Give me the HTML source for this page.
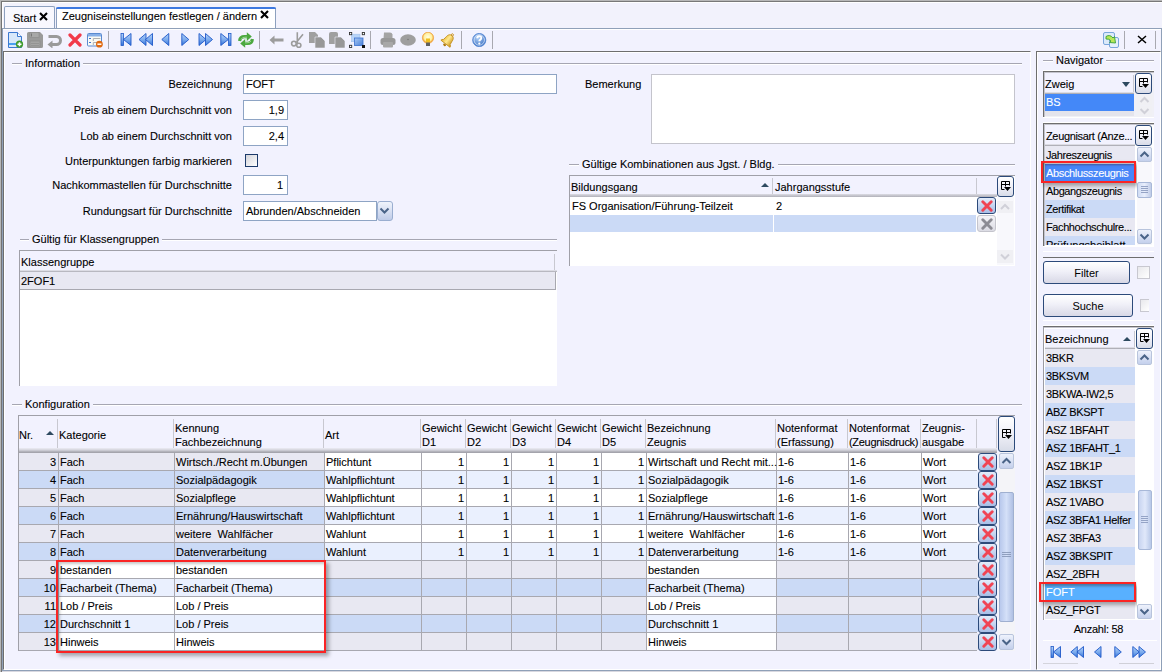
<!DOCTYPE html><html><head><meta charset="utf-8"><style>
html,body{margin:0;padding:0;}
body{width:1162px;height:672px;position:relative;overflow:hidden;background:#F2F2FE;font-family:"Liberation Sans",sans-serif;font-size:11px;color:#000;}
div{position:absolute;box-sizing:border-box;}
.t{white-space:nowrap;line-height:13px;-webkit-text-stroke:0.1px currentColor;}
</style></head><body>
<div style="left:0px;top:0px;width:1162px;height:1px;background:#B8B8B8"></div>
<div style="left:0px;top:0px;width:1px;height:672px;background:#B8B8B8"></div>
<div style="left:1px;top:1px;width:1161px;height:1px;background:#787878"></div>
<div style="left:1px;top:1px;width:1px;height:671px;background:#747474"></div>
<div style="left:2px;top:2px;width:1160px;height:1px;background:#FFFFFF"></div>
<div style="left:2px;top:3px;width:1px;height:26px;background:#FFFFFF"></div>
<div style="left:3px;top:3px;width:1159px;height:25px;background:#F2F2FC"></div>
<div style="left:2px;top:28px;width:1160px;height:644px;border:1px solid #8FA0B8;border-bottom:none"></div>
<div style="left:2px;top:670px;width:1160px;height:1px;background:#8FA0B8"></div>
<div style="left:2px;top:671px;width:1160px;height:1px;background:#D8D8E0"></div>
<div style="left:3px;top:29px;width:1158px;height:1px;background:#FFFFFF"></div>
<div style="left:4px;top:6px;width:51px;height:22px;background:#F8F8FE;border:1px solid #8DA0BE;border-bottom:none;border-radius:2px 2px 0 0"></div>
<div class="t" style="left:13px;top:12px;">Start</div>
<svg style="position:absolute;left:39px;top:12px" width="9" height="9" viewBox="0 0 9 9"><path d="M1 1L8 8M8 1L1 8" stroke="#000" stroke-width="2.1"/></svg>
<div style="left:56px;top:7px;width:220px;height:21px;background:#FFFFFF;border:1px solid #8DA0BE;border-top:none;border-bottom:none;border-radius:2px 2px 0 0"></div>
<div style="left:56px;top:7px;width:220px;height:2px;background:#3C78E0;border-radius:2px 2px 0 0"></div>
<div class="t" style="left:62px;top:10px;">Zeugniseinstellungen festlegen / ändern</div>
<svg style="position:absolute;left:260px;top:10px" width="9" height="9" viewBox="0 0 9 9"><path d="M1 1L8 8M8 1L1 8" stroke="#000" stroke-width="2.1"/></svg>
<div style="left:3px;top:51px;width:1028px;height:619px;border-top:1px solid #6E6E6E;border-left:1px solid #6E6E6E;border-right:1px solid #FFF;border-bottom:1px solid #FFF"></div>
<div style="left:4px;top:52px;width:1026px;height:1px;background:#fff"></div>
<div style="left:4px;top:52px;width:1px;height:617px;background:#fff"></div>
<div style="left:1036px;top:51px;width:125px;height:619px;border-top:1px solid #6E6E6E;border-left:1px solid #6E6E6E;border-right:1px solid #FFF;border-bottom:1px solid #FFF"></div>
<div style="left:1037px;top:52px;width:123px;height:1px;background:#fff"></div>
<div style="left:1037px;top:52px;width:1px;height:617px;background:#fff"></div>
<div style="left:12px;top:63px;width:1010px;height:1px;background:#A6A6B2"></div>
<div style="left:12px;top:64px;width:1010px;height:1px;background:#FFF"></div>
<div class="t" style="left:22px;top:57px;padding:0 3px;background:#F2F2FE">Information</div>
<div style="left:20px;top:239px;width:537px;height:1px;background:#A6A6B2"></div>
<div style="left:20px;top:240px;width:537px;height:1px;background:#FFF"></div>
<div class="t" style="left:29px;top:233px;padding:0 3px;background:#F2F2FE">Gültig für Klassengruppen</div>
<div style="left:569px;top:164px;width:446px;height:1px;background:#A6A6B2"></div>
<div style="left:569px;top:165px;width:446px;height:1px;background:#FFF"></div>
<div class="t" style="left:579px;top:158px;padding:0 3px;background:#F2F2FE">Gültige Kombinationen aus Jgst. / Bldg.</div>
<div style="left:12px;top:404px;width:1010px;height:1px;background:#A6A6B2"></div>
<div style="left:12px;top:405px;width:1010px;height:1px;background:#FFF"></div>
<div class="t" style="left:22px;top:398px;padding:0 3px;background:#F2F2FE">Konfiguration</div>
<div style="left:1043px;top:60px;width:111px;height:1px;background:#A6A6B2"></div>
<div style="left:1043px;top:61px;width:111px;height:1px;background:#FFF"></div>
<div class="t" style="left:1053px;top:54px;padding:0 3px;background:#F2F2FE">Navigator</div>
<div class="t" style="right:930px;top:78px;">Bezeichnung</div>
<div class="t" style="right:930px;top:104px;">Preis ab einem Durchschnitt von</div>
<div class="t" style="right:930px;top:130px;">Lob ab einem Durchschnitt von</div>
<div class="t" style="right:930px;top:155px;">Unterpunktungen farbig markieren</div>
<div class="t" style="right:930px;top:179px;">Nachkommastellen für Durchschnitte</div>
<div class="t" style="right:930px;top:205px;">Rundungsart für Durchschnitte</div>
<div style="left:243px;top:74px;width:314px;height:20px;background:#fff;border:1px solid #8EA4C4"></div>
<div class="t" style="left:246px;top:78px;">FOFT</div>
<div style="left:243px;top:100px;width:45px;height:20px;background:#fff;border:1px solid #8EA4C4"></div>
<div class="t" style="right:878px;top:104px;">1,9</div>
<div style="left:243px;top:126px;width:45px;height:20px;background:#fff;border:1px solid #8EA4C4"></div>
<div class="t" style="right:878px;top:130px;">2,4</div>
<div style="left:245px;top:154px;width:13px;height:13px;background:linear-gradient(135deg,#D4D4DA,#FFFFFF);border:1px solid #1C3A6A"></div>
<div style="left:243px;top:175px;width:45px;height:20px;background:#fff;border:1px solid #8EA4C4"></div>
<div class="t" style="right:879px;top:179px;">1</div>
<div style="left:243px;top:201px;width:134px;height:20px;background:#fff;border:1px solid #8EA4C4"></div>
<div class="t" style="left:246px;top:205px;">Abrunden/Abschneiden</div>
<div style="left:377px;top:201px;width:16px;height:20px;background:linear-gradient(#F0F4FC,#C0CCE8);border:1px solid #9AAED0;border-radius:3px"></div>
<svg style="position:absolute;left:379px;top:207px" width="11" height="8"><path d="M1.5 1.5L5.5 5.5L9.5 1.5" fill="none" stroke="#4A6488" stroke-width="2"/></svg>
<div class="t" style="left:585px;top:78px;">Bemerkung</div>
<div style="left:651px;top:74px;width:364px;height:70px;background:#fff;border:1px solid #C4C4CC"></div>
<div style="left:18px;top:415px;width:997px;height:236px;border-top:1px solid #A0A0A8;border-left:1px solid #A0A0A8;background:#F2F2FE"></div>
<div style="left:57px;top:419px;width:1px;height:29px;background:#C8C8D0"></div>
<div style="left:173px;top:419px;width:1px;height:29px;background:#C8C8D0"></div>
<div style="left:323px;top:419px;width:1px;height:29px;background:#C8C8D0"></div>
<div style="left:420px;top:419px;width:1px;height:29px;background:#C8C8D0"></div>
<div style="left:465px;top:419px;width:1px;height:29px;background:#C8C8D0"></div>
<div style="left:510px;top:419px;width:1px;height:29px;background:#C8C8D0"></div>
<div style="left:555px;top:419px;width:1px;height:29px;background:#C8C8D0"></div>
<div style="left:600px;top:419px;width:1px;height:29px;background:#C8C8D0"></div>
<div style="left:645px;top:419px;width:1px;height:29px;background:#C8C8D0"></div>
<div style="left:775px;top:419px;width:1px;height:29px;background:#C8C8D0"></div>
<div style="left:847px;top:419px;width:1px;height:29px;background:#C8C8D0"></div>
<div style="left:920px;top:419px;width:1px;height:29px;background:#C8C8D0"></div>
<div style="left:976px;top:419px;width:1px;height:29px;background:#C8C8D0"></div>
<div style="left:996px;top:419px;width:1px;height:29px;background:#C8C8D0"></div>
<div style="left:19px;top:448px;width:978px;height:5px;background:linear-gradient(#ECECF4,#D4D4DC 40%,#A8A8B0 80%,#A0A0A8)"></div>
<div class="t" style="left:19px;top:429px;">Nr.</div>
<div class="t" style="left:59px;top:429px;">Kategorie</div>
<div class="t" style="left:175px;top:421px;line-height:14px;">Kennung<br>Fachbezeichnung</div>
<div class="t" style="left:325px;top:429px;">Art</div>
<div class="t" style="left:422px;top:421px;line-height:14px;">Gewicht<br>D1</div>
<div class="t" style="left:467px;top:421px;line-height:14px;">Gewicht<br>D2</div>
<div class="t" style="left:512px;top:421px;line-height:14px;">Gewicht<br>D3</div>
<div class="t" style="left:557px;top:421px;line-height:14px;">Gewicht<br>D4</div>
<div class="t" style="left:602px;top:421px;line-height:14px;">Gewicht<br>D5</div>
<div class="t" style="left:647px;top:421px;line-height:14px;">Bezeichnung<br>Zeugnis</div>
<div class="t" style="left:777px;top:421px;line-height:14px;">Notenformat<br>(Erfassung)</div>
<div class="t" style="left:849px;top:421px;line-height:14px;">Notenformat<br><span style="letter-spacing:-0.3px">(Zeugnisdruck)</span></div>
<div class="t" style="left:922px;top:421px;line-height:14px;">Zeugnis-<br>ausgabe</div>
<div style="left:46px;top:431px;width:0;height:0;border-left:4px solid transparent;border-right:4px solid transparent;border-bottom:4px solid #2E4A60"></div>
<div style="left:19px;top:453px;width:40px;height:17px;background:#E8E8F2"></div>
<div style="left:58px;top:453px;width:1px;height:18px;background:#A8A8B0"></div>
<div style="left:59px;top:453px;width:116px;height:17px;background:#E8E8F2"></div>
<div style="left:174px;top:453px;width:1px;height:18px;background:#A8A8B0"></div>
<div style="left:175px;top:453px;width:150px;height:17px;background:#E8E8F2"></div>
<div style="left:324px;top:453px;width:1px;height:18px;background:#A8A8B0"></div>
<div style="left:325px;top:453px;width:97px;height:17px;background:#FFFFFF"></div>
<div style="left:421px;top:453px;width:1px;height:18px;background:#A8A8B0"></div>
<div style="left:422px;top:453px;width:45px;height:17px;background:#FFFFFF"></div>
<div style="left:466px;top:453px;width:1px;height:18px;background:#A8A8B0"></div>
<div style="left:467px;top:453px;width:45px;height:17px;background:#FFFFFF"></div>
<div style="left:511px;top:453px;width:1px;height:18px;background:#A8A8B0"></div>
<div style="left:512px;top:453px;width:45px;height:17px;background:#FFFFFF"></div>
<div style="left:556px;top:453px;width:1px;height:18px;background:#A8A8B0"></div>
<div style="left:557px;top:453px;width:45px;height:17px;background:#FFFFFF"></div>
<div style="left:601px;top:453px;width:1px;height:18px;background:#A8A8B0"></div>
<div style="left:602px;top:453px;width:45px;height:17px;background:#FFFFFF"></div>
<div style="left:646px;top:453px;width:1px;height:18px;background:#A8A8B0"></div>
<div style="left:647px;top:453px;width:130px;height:17px;background:#FFFFFF"></div>
<div style="left:776px;top:453px;width:1px;height:18px;background:#A8A8B0"></div>
<div style="left:777px;top:453px;width:72px;height:17px;background:#FFFFFF"></div>
<div style="left:848px;top:453px;width:1px;height:18px;background:#A8A8B0"></div>
<div style="left:849px;top:453px;width:73px;height:17px;background:#FFFFFF"></div>
<div style="left:921px;top:453px;width:1px;height:18px;background:#A8A8B0"></div>
<div style="left:922px;top:453px;width:56px;height:17px;background:#FFFFFF"></div>
<div style="left:19px;top:470px;width:958px;height:1px;background:#A8A8B0"></div>
<div class="t" style="right:1106px;top:456px;">3</div>
<div class="t" style="left:60px;top:456px;">Fach</div>
<div class="t" style="left:176px;top:456px;">Wirtsch./Recht m.Übungen</div>
<div class="t" style="left:326px;top:456px;">Pflichtunt</div>
<div class="t" style="right:698px;top:456px;">1</div>
<div class="t" style="right:653px;top:456px;">1</div>
<div class="t" style="right:608px;top:456px;">1</div>
<div class="t" style="right:563px;top:456px;">1</div>
<div class="t" style="right:518px;top:456px;">1</div>
<div class="t" style="left:648px;top:456px;">Wirtschaft und Recht mit...</div>
<div class="t" style="left:778px;top:456px;">1-6</div>
<div class="t" style="left:850px;top:456px;">1-6</div>
<div class="t" style="left:923px;top:456px;">Wort</div>
<div style="left:978px;top:453px;width:19px;height:18px;border:1px solid #2C4A7A;border-radius:3px;background:linear-gradient(#E4ECFA,#A8BEE6)"></div>
<svg style="position:absolute;left:981.5px;top:456.0px" width="12" height="12" viewBox="0 0 12 12"><path d="M1.8 1.8L10.2 10.2M10.2 1.8L1.8 10.2" stroke="#F04454" stroke-width="2.9" stroke-linecap="round"/></svg>
<div style="left:19px;top:471px;width:40px;height:17px;background:#CBDAF6"></div>
<div style="left:58px;top:471px;width:1px;height:18px;background:#A8A8B0"></div>
<div style="left:59px;top:471px;width:116px;height:17px;background:#CBDAF6"></div>
<div style="left:174px;top:471px;width:1px;height:18px;background:#A8A8B0"></div>
<div style="left:175px;top:471px;width:150px;height:17px;background:#CBDAF6"></div>
<div style="left:324px;top:471px;width:1px;height:18px;background:#A8A8B0"></div>
<div style="left:325px;top:471px;width:97px;height:17px;background:#EAF0FE"></div>
<div style="left:421px;top:471px;width:1px;height:18px;background:#A8A8B0"></div>
<div style="left:422px;top:471px;width:45px;height:17px;background:#EAF0FE"></div>
<div style="left:466px;top:471px;width:1px;height:18px;background:#A8A8B0"></div>
<div style="left:467px;top:471px;width:45px;height:17px;background:#EAF0FE"></div>
<div style="left:511px;top:471px;width:1px;height:18px;background:#A8A8B0"></div>
<div style="left:512px;top:471px;width:45px;height:17px;background:#EAF0FE"></div>
<div style="left:556px;top:471px;width:1px;height:18px;background:#A8A8B0"></div>
<div style="left:557px;top:471px;width:45px;height:17px;background:#EAF0FE"></div>
<div style="left:601px;top:471px;width:1px;height:18px;background:#A8A8B0"></div>
<div style="left:602px;top:471px;width:45px;height:17px;background:#EAF0FE"></div>
<div style="left:646px;top:471px;width:1px;height:18px;background:#A8A8B0"></div>
<div style="left:647px;top:471px;width:130px;height:17px;background:#EAF0FE"></div>
<div style="left:776px;top:471px;width:1px;height:18px;background:#A8A8B0"></div>
<div style="left:777px;top:471px;width:72px;height:17px;background:#EAF0FE"></div>
<div style="left:848px;top:471px;width:1px;height:18px;background:#A8A8B0"></div>
<div style="left:849px;top:471px;width:73px;height:17px;background:#EAF0FE"></div>
<div style="left:921px;top:471px;width:1px;height:18px;background:#A8A8B0"></div>
<div style="left:922px;top:471px;width:56px;height:17px;background:#EAF0FE"></div>
<div style="left:19px;top:488px;width:958px;height:1px;background:#A8A8B0"></div>
<div class="t" style="right:1106px;top:474px;">4</div>
<div class="t" style="left:60px;top:474px;">Fach</div>
<div class="t" style="left:176px;top:474px;">Sozialpädagogik</div>
<div class="t" style="left:326px;top:474px;">Wahlpflichtunt</div>
<div class="t" style="right:698px;top:474px;">1</div>
<div class="t" style="right:653px;top:474px;">1</div>
<div class="t" style="right:608px;top:474px;">1</div>
<div class="t" style="right:563px;top:474px;">1</div>
<div class="t" style="right:518px;top:474px;">1</div>
<div class="t" style="left:648px;top:474px;">Sozialpädagogik</div>
<div class="t" style="left:778px;top:474px;">1-6</div>
<div class="t" style="left:850px;top:474px;">1-6</div>
<div class="t" style="left:923px;top:474px;">Wort</div>
<div style="left:978px;top:471px;width:19px;height:18px;border:1px solid #2C4A7A;border-radius:3px;background:linear-gradient(#E4ECFA,#A8BEE6)"></div>
<svg style="position:absolute;left:981.5px;top:474.0px" width="12" height="12" viewBox="0 0 12 12"><path d="M1.8 1.8L10.2 10.2M10.2 1.8L1.8 10.2" stroke="#F04454" stroke-width="2.9" stroke-linecap="round"/></svg>
<div style="left:19px;top:489px;width:40px;height:17px;background:#E8E8F2"></div>
<div style="left:58px;top:489px;width:1px;height:18px;background:#A8A8B0"></div>
<div style="left:59px;top:489px;width:116px;height:17px;background:#E8E8F2"></div>
<div style="left:174px;top:489px;width:1px;height:18px;background:#A8A8B0"></div>
<div style="left:175px;top:489px;width:150px;height:17px;background:#E8E8F2"></div>
<div style="left:324px;top:489px;width:1px;height:18px;background:#A8A8B0"></div>
<div style="left:325px;top:489px;width:97px;height:17px;background:#FFFFFF"></div>
<div style="left:421px;top:489px;width:1px;height:18px;background:#A8A8B0"></div>
<div style="left:422px;top:489px;width:45px;height:17px;background:#FFFFFF"></div>
<div style="left:466px;top:489px;width:1px;height:18px;background:#A8A8B0"></div>
<div style="left:467px;top:489px;width:45px;height:17px;background:#FFFFFF"></div>
<div style="left:511px;top:489px;width:1px;height:18px;background:#A8A8B0"></div>
<div style="left:512px;top:489px;width:45px;height:17px;background:#FFFFFF"></div>
<div style="left:556px;top:489px;width:1px;height:18px;background:#A8A8B0"></div>
<div style="left:557px;top:489px;width:45px;height:17px;background:#FFFFFF"></div>
<div style="left:601px;top:489px;width:1px;height:18px;background:#A8A8B0"></div>
<div style="left:602px;top:489px;width:45px;height:17px;background:#FFFFFF"></div>
<div style="left:646px;top:489px;width:1px;height:18px;background:#A8A8B0"></div>
<div style="left:647px;top:489px;width:130px;height:17px;background:#FFFFFF"></div>
<div style="left:776px;top:489px;width:1px;height:18px;background:#A8A8B0"></div>
<div style="left:777px;top:489px;width:72px;height:17px;background:#FFFFFF"></div>
<div style="left:848px;top:489px;width:1px;height:18px;background:#A8A8B0"></div>
<div style="left:849px;top:489px;width:73px;height:17px;background:#FFFFFF"></div>
<div style="left:921px;top:489px;width:1px;height:18px;background:#A8A8B0"></div>
<div style="left:922px;top:489px;width:56px;height:17px;background:#FFFFFF"></div>
<div style="left:19px;top:506px;width:958px;height:1px;background:#A8A8B0"></div>
<div class="t" style="right:1106px;top:492px;">5</div>
<div class="t" style="left:60px;top:492px;">Fach</div>
<div class="t" style="left:176px;top:492px;">Sozialpflege</div>
<div class="t" style="left:326px;top:492px;">Wahlpflichtunt</div>
<div class="t" style="right:698px;top:492px;">1</div>
<div class="t" style="right:653px;top:492px;">1</div>
<div class="t" style="right:608px;top:492px;">1</div>
<div class="t" style="right:563px;top:492px;">1</div>
<div class="t" style="right:518px;top:492px;">1</div>
<div class="t" style="left:648px;top:492px;">Sozialpflege</div>
<div class="t" style="left:778px;top:492px;">1-6</div>
<div class="t" style="left:850px;top:492px;">1-6</div>
<div class="t" style="left:923px;top:492px;">Wort</div>
<div style="left:978px;top:489px;width:19px;height:18px;border:1px solid #2C4A7A;border-radius:3px;background:linear-gradient(#E4ECFA,#A8BEE6)"></div>
<svg style="position:absolute;left:981.5px;top:492.0px" width="12" height="12" viewBox="0 0 12 12"><path d="M1.8 1.8L10.2 10.2M10.2 1.8L1.8 10.2" stroke="#F04454" stroke-width="2.9" stroke-linecap="round"/></svg>
<div style="left:19px;top:507px;width:40px;height:17px;background:#CBDAF6"></div>
<div style="left:58px;top:507px;width:1px;height:18px;background:#A8A8B0"></div>
<div style="left:59px;top:507px;width:116px;height:17px;background:#CBDAF6"></div>
<div style="left:174px;top:507px;width:1px;height:18px;background:#A8A8B0"></div>
<div style="left:175px;top:507px;width:150px;height:17px;background:#CBDAF6"></div>
<div style="left:324px;top:507px;width:1px;height:18px;background:#A8A8B0"></div>
<div style="left:325px;top:507px;width:97px;height:17px;background:#EAF0FE"></div>
<div style="left:421px;top:507px;width:1px;height:18px;background:#A8A8B0"></div>
<div style="left:422px;top:507px;width:45px;height:17px;background:#EAF0FE"></div>
<div style="left:466px;top:507px;width:1px;height:18px;background:#A8A8B0"></div>
<div style="left:467px;top:507px;width:45px;height:17px;background:#EAF0FE"></div>
<div style="left:511px;top:507px;width:1px;height:18px;background:#A8A8B0"></div>
<div style="left:512px;top:507px;width:45px;height:17px;background:#EAF0FE"></div>
<div style="left:556px;top:507px;width:1px;height:18px;background:#A8A8B0"></div>
<div style="left:557px;top:507px;width:45px;height:17px;background:#EAF0FE"></div>
<div style="left:601px;top:507px;width:1px;height:18px;background:#A8A8B0"></div>
<div style="left:602px;top:507px;width:45px;height:17px;background:#EAF0FE"></div>
<div style="left:646px;top:507px;width:1px;height:18px;background:#A8A8B0"></div>
<div style="left:647px;top:507px;width:130px;height:17px;background:#EAF0FE"></div>
<div style="left:776px;top:507px;width:1px;height:18px;background:#A8A8B0"></div>
<div style="left:777px;top:507px;width:72px;height:17px;background:#EAF0FE"></div>
<div style="left:848px;top:507px;width:1px;height:18px;background:#A8A8B0"></div>
<div style="left:849px;top:507px;width:73px;height:17px;background:#EAF0FE"></div>
<div style="left:921px;top:507px;width:1px;height:18px;background:#A8A8B0"></div>
<div style="left:922px;top:507px;width:56px;height:17px;background:#EAF0FE"></div>
<div style="left:19px;top:524px;width:958px;height:1px;background:#A8A8B0"></div>
<div class="t" style="right:1106px;top:510px;">6</div>
<div class="t" style="left:60px;top:510px;">Fach</div>
<div class="t" style="left:176px;top:510px;">Ernährung/Hauswirtschaft</div>
<div class="t" style="left:326px;top:510px;">Wahlpflichtunt</div>
<div class="t" style="right:698px;top:510px;">1</div>
<div class="t" style="right:653px;top:510px;">1</div>
<div class="t" style="right:608px;top:510px;">1</div>
<div class="t" style="right:563px;top:510px;">1</div>
<div class="t" style="right:518px;top:510px;">1</div>
<div class="t" style="left:648px;top:510px;">Ernährung/Hauswirtschaft</div>
<div class="t" style="left:778px;top:510px;">1-6</div>
<div class="t" style="left:850px;top:510px;">1-6</div>
<div class="t" style="left:923px;top:510px;">Wort</div>
<div style="left:978px;top:507px;width:19px;height:18px;border:1px solid #2C4A7A;border-radius:3px;background:linear-gradient(#E4ECFA,#A8BEE6)"></div>
<svg style="position:absolute;left:981.5px;top:510.0px" width="12" height="12" viewBox="0 0 12 12"><path d="M1.8 1.8L10.2 10.2M10.2 1.8L1.8 10.2" stroke="#F04454" stroke-width="2.9" stroke-linecap="round"/></svg>
<div style="left:19px;top:525px;width:40px;height:17px;background:#E8E8F2"></div>
<div style="left:58px;top:525px;width:1px;height:18px;background:#A8A8B0"></div>
<div style="left:59px;top:525px;width:116px;height:17px;background:#E8E8F2"></div>
<div style="left:174px;top:525px;width:1px;height:18px;background:#A8A8B0"></div>
<div style="left:175px;top:525px;width:150px;height:17px;background:#E8E8F2"></div>
<div style="left:324px;top:525px;width:1px;height:18px;background:#A8A8B0"></div>
<div style="left:325px;top:525px;width:97px;height:17px;background:#FFFFFF"></div>
<div style="left:421px;top:525px;width:1px;height:18px;background:#A8A8B0"></div>
<div style="left:422px;top:525px;width:45px;height:17px;background:#FFFFFF"></div>
<div style="left:466px;top:525px;width:1px;height:18px;background:#A8A8B0"></div>
<div style="left:467px;top:525px;width:45px;height:17px;background:#FFFFFF"></div>
<div style="left:511px;top:525px;width:1px;height:18px;background:#A8A8B0"></div>
<div style="left:512px;top:525px;width:45px;height:17px;background:#FFFFFF"></div>
<div style="left:556px;top:525px;width:1px;height:18px;background:#A8A8B0"></div>
<div style="left:557px;top:525px;width:45px;height:17px;background:#FFFFFF"></div>
<div style="left:601px;top:525px;width:1px;height:18px;background:#A8A8B0"></div>
<div style="left:602px;top:525px;width:45px;height:17px;background:#FFFFFF"></div>
<div style="left:646px;top:525px;width:1px;height:18px;background:#A8A8B0"></div>
<div style="left:647px;top:525px;width:130px;height:17px;background:#FFFFFF"></div>
<div style="left:776px;top:525px;width:1px;height:18px;background:#A8A8B0"></div>
<div style="left:777px;top:525px;width:72px;height:17px;background:#FFFFFF"></div>
<div style="left:848px;top:525px;width:1px;height:18px;background:#A8A8B0"></div>
<div style="left:849px;top:525px;width:73px;height:17px;background:#FFFFFF"></div>
<div style="left:921px;top:525px;width:1px;height:18px;background:#A8A8B0"></div>
<div style="left:922px;top:525px;width:56px;height:17px;background:#FFFFFF"></div>
<div style="left:19px;top:542px;width:958px;height:1px;background:#A8A8B0"></div>
<div class="t" style="right:1106px;top:528px;">7</div>
<div class="t" style="left:60px;top:528px;">Fach</div>
<div class="t" style="left:176px;top:528px;">weitere&nbsp; Wahlfächer</div>
<div class="t" style="left:326px;top:528px;">Wahlunt</div>
<div class="t" style="right:698px;top:528px;">1</div>
<div class="t" style="right:653px;top:528px;">1</div>
<div class="t" style="right:608px;top:528px;">1</div>
<div class="t" style="right:563px;top:528px;">1</div>
<div class="t" style="right:518px;top:528px;">1</div>
<div class="t" style="left:648px;top:528px;">weitere&nbsp; Wahlfächer</div>
<div class="t" style="left:778px;top:528px;">1-6</div>
<div class="t" style="left:850px;top:528px;">1-6</div>
<div class="t" style="left:923px;top:528px;">Wort</div>
<div style="left:978px;top:525px;width:19px;height:18px;border:1px solid #2C4A7A;border-radius:3px;background:linear-gradient(#E4ECFA,#A8BEE6)"></div>
<svg style="position:absolute;left:981.5px;top:528.0px" width="12" height="12" viewBox="0 0 12 12"><path d="M1.8 1.8L10.2 10.2M10.2 1.8L1.8 10.2" stroke="#F04454" stroke-width="2.9" stroke-linecap="round"/></svg>
<div style="left:19px;top:543px;width:40px;height:17px;background:#CBDAF6"></div>
<div style="left:58px;top:543px;width:1px;height:18px;background:#A8A8B0"></div>
<div style="left:59px;top:543px;width:116px;height:17px;background:#CBDAF6"></div>
<div style="left:174px;top:543px;width:1px;height:18px;background:#A8A8B0"></div>
<div style="left:175px;top:543px;width:150px;height:17px;background:#CBDAF6"></div>
<div style="left:324px;top:543px;width:1px;height:18px;background:#A8A8B0"></div>
<div style="left:325px;top:543px;width:97px;height:17px;background:#EAF0FE"></div>
<div style="left:421px;top:543px;width:1px;height:18px;background:#A8A8B0"></div>
<div style="left:422px;top:543px;width:45px;height:17px;background:#EAF0FE"></div>
<div style="left:466px;top:543px;width:1px;height:18px;background:#A8A8B0"></div>
<div style="left:467px;top:543px;width:45px;height:17px;background:#EAF0FE"></div>
<div style="left:511px;top:543px;width:1px;height:18px;background:#A8A8B0"></div>
<div style="left:512px;top:543px;width:45px;height:17px;background:#EAF0FE"></div>
<div style="left:556px;top:543px;width:1px;height:18px;background:#A8A8B0"></div>
<div style="left:557px;top:543px;width:45px;height:17px;background:#EAF0FE"></div>
<div style="left:601px;top:543px;width:1px;height:18px;background:#A8A8B0"></div>
<div style="left:602px;top:543px;width:45px;height:17px;background:#EAF0FE"></div>
<div style="left:646px;top:543px;width:1px;height:18px;background:#A8A8B0"></div>
<div style="left:647px;top:543px;width:130px;height:17px;background:#EAF0FE"></div>
<div style="left:776px;top:543px;width:1px;height:18px;background:#A8A8B0"></div>
<div style="left:777px;top:543px;width:72px;height:17px;background:#EAF0FE"></div>
<div style="left:848px;top:543px;width:1px;height:18px;background:#A8A8B0"></div>
<div style="left:849px;top:543px;width:73px;height:17px;background:#EAF0FE"></div>
<div style="left:921px;top:543px;width:1px;height:18px;background:#A8A8B0"></div>
<div style="left:922px;top:543px;width:56px;height:17px;background:#EAF0FE"></div>
<div style="left:19px;top:560px;width:958px;height:1px;background:#A8A8B0"></div>
<div class="t" style="right:1106px;top:546px;">8</div>
<div class="t" style="left:60px;top:546px;">Fach</div>
<div class="t" style="left:176px;top:546px;">Datenverarbeitung</div>
<div class="t" style="left:326px;top:546px;">Wahlunt</div>
<div class="t" style="right:698px;top:546px;">1</div>
<div class="t" style="right:653px;top:546px;">1</div>
<div class="t" style="right:608px;top:546px;">1</div>
<div class="t" style="right:563px;top:546px;">1</div>
<div class="t" style="right:518px;top:546px;">1</div>
<div class="t" style="left:648px;top:546px;">Datenverarbeitung</div>
<div class="t" style="left:778px;top:546px;">1-6</div>
<div class="t" style="left:850px;top:546px;">1-6</div>
<div class="t" style="left:923px;top:546px;">Wort</div>
<div style="left:978px;top:543px;width:19px;height:18px;border:1px solid #2C4A7A;border-radius:3px;background:linear-gradient(#E4ECFA,#A8BEE6)"></div>
<svg style="position:absolute;left:981.5px;top:546.0px" width="12" height="12" viewBox="0 0 12 12"><path d="M1.8 1.8L10.2 10.2M10.2 1.8L1.8 10.2" stroke="#F04454" stroke-width="2.9" stroke-linecap="round"/></svg>
<div style="left:19px;top:561px;width:40px;height:17px;background:#E8E8F2"></div>
<div style="left:58px;top:561px;width:1px;height:18px;background:#A8A8B0"></div>
<div style="left:59px;top:561px;width:116px;height:17px;background:#FFFFFF"></div>
<div style="left:174px;top:561px;width:1px;height:18px;background:#A8A8B0"></div>
<div style="left:175px;top:561px;width:150px;height:17px;background:#FFFFFF"></div>
<div style="left:324px;top:561px;width:1px;height:18px;background:#A8A8B0"></div>
<div style="left:325px;top:561px;width:97px;height:17px;background:#E8E8F2"></div>
<div style="left:421px;top:561px;width:1px;height:18px;background:#A8A8B0"></div>
<div style="left:422px;top:561px;width:45px;height:17px;background:#E8E8F2"></div>
<div style="left:466px;top:561px;width:1px;height:18px;background:#A8A8B0"></div>
<div style="left:467px;top:561px;width:45px;height:17px;background:#E8E8F2"></div>
<div style="left:511px;top:561px;width:1px;height:18px;background:#A8A8B0"></div>
<div style="left:512px;top:561px;width:45px;height:17px;background:#E8E8F2"></div>
<div style="left:556px;top:561px;width:1px;height:18px;background:#A8A8B0"></div>
<div style="left:557px;top:561px;width:45px;height:17px;background:#E8E8F2"></div>
<div style="left:601px;top:561px;width:1px;height:18px;background:#A8A8B0"></div>
<div style="left:602px;top:561px;width:45px;height:17px;background:#E8E8F2"></div>
<div style="left:646px;top:561px;width:1px;height:18px;background:#A8A8B0"></div>
<div style="left:647px;top:561px;width:130px;height:17px;background:#FFFFFF"></div>
<div style="left:776px;top:561px;width:1px;height:18px;background:#A8A8B0"></div>
<div style="left:777px;top:561px;width:72px;height:17px;background:#E8E8F2"></div>
<div style="left:848px;top:561px;width:1px;height:18px;background:#A8A8B0"></div>
<div style="left:849px;top:561px;width:73px;height:17px;background:#E8E8F2"></div>
<div style="left:921px;top:561px;width:1px;height:18px;background:#A8A8B0"></div>
<div style="left:922px;top:561px;width:56px;height:17px;background:#E8E8F2"></div>
<div style="left:19px;top:578px;width:958px;height:1px;background:#A8A8B0"></div>
<div class="t" style="right:1106px;top:564px;">9</div>
<div class="t" style="left:60px;top:564px;">bestanden</div>
<div class="t" style="left:176px;top:564px;">bestanden</div>
<div class="t" style="left:326px;top:564px;"></div>
<div class="t" style="left:648px;top:564px;">bestanden</div>
<div class="t" style="left:778px;top:564px;"></div>
<div class="t" style="left:850px;top:564px;"></div>
<div class="t" style="left:923px;top:564px;"></div>
<div style="left:978px;top:561px;width:19px;height:18px;border:1px solid #2C4A7A;border-radius:3px;background:linear-gradient(#E4ECFA,#A8BEE6)"></div>
<svg style="position:absolute;left:981.5px;top:564.0px" width="12" height="12" viewBox="0 0 12 12"><path d="M1.8 1.8L10.2 10.2M10.2 1.8L1.8 10.2" stroke="#F04454" stroke-width="2.9" stroke-linecap="round"/></svg>
<div style="left:19px;top:579px;width:40px;height:17px;background:#CBDAF6"></div>
<div style="left:58px;top:579px;width:1px;height:18px;background:#A8A8B0"></div>
<div style="left:59px;top:579px;width:116px;height:17px;background:#EAF0FE"></div>
<div style="left:174px;top:579px;width:1px;height:18px;background:#A8A8B0"></div>
<div style="left:175px;top:579px;width:150px;height:17px;background:#EAF0FE"></div>
<div style="left:324px;top:579px;width:1px;height:18px;background:#A8A8B0"></div>
<div style="left:325px;top:579px;width:97px;height:17px;background:#CBDAF6"></div>
<div style="left:421px;top:579px;width:1px;height:18px;background:#A8A8B0"></div>
<div style="left:422px;top:579px;width:45px;height:17px;background:#CBDAF6"></div>
<div style="left:466px;top:579px;width:1px;height:18px;background:#A8A8B0"></div>
<div style="left:467px;top:579px;width:45px;height:17px;background:#CBDAF6"></div>
<div style="left:511px;top:579px;width:1px;height:18px;background:#A8A8B0"></div>
<div style="left:512px;top:579px;width:45px;height:17px;background:#CBDAF6"></div>
<div style="left:556px;top:579px;width:1px;height:18px;background:#A8A8B0"></div>
<div style="left:557px;top:579px;width:45px;height:17px;background:#CBDAF6"></div>
<div style="left:601px;top:579px;width:1px;height:18px;background:#A8A8B0"></div>
<div style="left:602px;top:579px;width:45px;height:17px;background:#CBDAF6"></div>
<div style="left:646px;top:579px;width:1px;height:18px;background:#A8A8B0"></div>
<div style="left:647px;top:579px;width:130px;height:17px;background:#EAF0FE"></div>
<div style="left:776px;top:579px;width:1px;height:18px;background:#A8A8B0"></div>
<div style="left:777px;top:579px;width:72px;height:17px;background:#CBDAF6"></div>
<div style="left:848px;top:579px;width:1px;height:18px;background:#A8A8B0"></div>
<div style="left:849px;top:579px;width:73px;height:17px;background:#CBDAF6"></div>
<div style="left:921px;top:579px;width:1px;height:18px;background:#A8A8B0"></div>
<div style="left:922px;top:579px;width:56px;height:17px;background:#CBDAF6"></div>
<div style="left:19px;top:596px;width:958px;height:1px;background:#A8A8B0"></div>
<div class="t" style="right:1106px;top:582px;">10</div>
<div class="t" style="left:60px;top:582px;">Facharbeit (Thema)</div>
<div class="t" style="left:176px;top:582px;">Facharbeit (Thema)</div>
<div class="t" style="left:326px;top:582px;"></div>
<div class="t" style="left:648px;top:582px;">Facharbeit (Thema)</div>
<div class="t" style="left:778px;top:582px;"></div>
<div class="t" style="left:850px;top:582px;"></div>
<div class="t" style="left:923px;top:582px;"></div>
<div style="left:978px;top:579px;width:19px;height:18px;border:1px solid #2C4A7A;border-radius:3px;background:linear-gradient(#E4ECFA,#A8BEE6)"></div>
<svg style="position:absolute;left:981.5px;top:582.0px" width="12" height="12" viewBox="0 0 12 12"><path d="M1.8 1.8L10.2 10.2M10.2 1.8L1.8 10.2" stroke="#F04454" stroke-width="2.9" stroke-linecap="round"/></svg>
<div style="left:19px;top:597px;width:40px;height:17px;background:#E8E8F2"></div>
<div style="left:58px;top:597px;width:1px;height:18px;background:#A8A8B0"></div>
<div style="left:59px;top:597px;width:116px;height:17px;background:#FFFFFF"></div>
<div style="left:174px;top:597px;width:1px;height:18px;background:#A8A8B0"></div>
<div style="left:175px;top:597px;width:150px;height:17px;background:#FFFFFF"></div>
<div style="left:324px;top:597px;width:1px;height:18px;background:#A8A8B0"></div>
<div style="left:325px;top:597px;width:97px;height:17px;background:#E8E8F2"></div>
<div style="left:421px;top:597px;width:1px;height:18px;background:#A8A8B0"></div>
<div style="left:422px;top:597px;width:45px;height:17px;background:#E8E8F2"></div>
<div style="left:466px;top:597px;width:1px;height:18px;background:#A8A8B0"></div>
<div style="left:467px;top:597px;width:45px;height:17px;background:#E8E8F2"></div>
<div style="left:511px;top:597px;width:1px;height:18px;background:#A8A8B0"></div>
<div style="left:512px;top:597px;width:45px;height:17px;background:#E8E8F2"></div>
<div style="left:556px;top:597px;width:1px;height:18px;background:#A8A8B0"></div>
<div style="left:557px;top:597px;width:45px;height:17px;background:#E8E8F2"></div>
<div style="left:601px;top:597px;width:1px;height:18px;background:#A8A8B0"></div>
<div style="left:602px;top:597px;width:45px;height:17px;background:#E8E8F2"></div>
<div style="left:646px;top:597px;width:1px;height:18px;background:#A8A8B0"></div>
<div style="left:647px;top:597px;width:130px;height:17px;background:#FFFFFF"></div>
<div style="left:776px;top:597px;width:1px;height:18px;background:#A8A8B0"></div>
<div style="left:777px;top:597px;width:72px;height:17px;background:#E8E8F2"></div>
<div style="left:848px;top:597px;width:1px;height:18px;background:#A8A8B0"></div>
<div style="left:849px;top:597px;width:73px;height:17px;background:#E8E8F2"></div>
<div style="left:921px;top:597px;width:1px;height:18px;background:#A8A8B0"></div>
<div style="left:922px;top:597px;width:56px;height:17px;background:#E8E8F2"></div>
<div style="left:19px;top:614px;width:958px;height:1px;background:#A8A8B0"></div>
<div class="t" style="right:1106px;top:600px;">11</div>
<div class="t" style="left:60px;top:600px;">Lob / Preis</div>
<div class="t" style="left:176px;top:600px;">Lob / Preis</div>
<div class="t" style="left:326px;top:600px;"></div>
<div class="t" style="left:648px;top:600px;">Lob / Preis</div>
<div class="t" style="left:778px;top:600px;"></div>
<div class="t" style="left:850px;top:600px;"></div>
<div class="t" style="left:923px;top:600px;"></div>
<div style="left:978px;top:597px;width:19px;height:18px;border:1px solid #2C4A7A;border-radius:3px;background:linear-gradient(#E4ECFA,#A8BEE6)"></div>
<svg style="position:absolute;left:981.5px;top:600.0px" width="12" height="12" viewBox="0 0 12 12"><path d="M1.8 1.8L10.2 10.2M10.2 1.8L1.8 10.2" stroke="#F04454" stroke-width="2.9" stroke-linecap="round"/></svg>
<div style="left:19px;top:615px;width:40px;height:17px;background:#CBDAF6"></div>
<div style="left:58px;top:615px;width:1px;height:18px;background:#A8A8B0"></div>
<div style="left:59px;top:615px;width:116px;height:17px;background:#EAF0FE"></div>
<div style="left:174px;top:615px;width:1px;height:18px;background:#A8A8B0"></div>
<div style="left:175px;top:615px;width:150px;height:17px;background:#EAF0FE"></div>
<div style="left:324px;top:615px;width:1px;height:18px;background:#A8A8B0"></div>
<div style="left:325px;top:615px;width:97px;height:17px;background:#CBDAF6"></div>
<div style="left:421px;top:615px;width:1px;height:18px;background:#A8A8B0"></div>
<div style="left:422px;top:615px;width:45px;height:17px;background:#CBDAF6"></div>
<div style="left:466px;top:615px;width:1px;height:18px;background:#A8A8B0"></div>
<div style="left:467px;top:615px;width:45px;height:17px;background:#CBDAF6"></div>
<div style="left:511px;top:615px;width:1px;height:18px;background:#A8A8B0"></div>
<div style="left:512px;top:615px;width:45px;height:17px;background:#CBDAF6"></div>
<div style="left:556px;top:615px;width:1px;height:18px;background:#A8A8B0"></div>
<div style="left:557px;top:615px;width:45px;height:17px;background:#CBDAF6"></div>
<div style="left:601px;top:615px;width:1px;height:18px;background:#A8A8B0"></div>
<div style="left:602px;top:615px;width:45px;height:17px;background:#CBDAF6"></div>
<div style="left:646px;top:615px;width:1px;height:18px;background:#A8A8B0"></div>
<div style="left:647px;top:615px;width:130px;height:17px;background:#EAF0FE"></div>
<div style="left:776px;top:615px;width:1px;height:18px;background:#A8A8B0"></div>
<div style="left:777px;top:615px;width:72px;height:17px;background:#CBDAF6"></div>
<div style="left:848px;top:615px;width:1px;height:18px;background:#A8A8B0"></div>
<div style="left:849px;top:615px;width:73px;height:17px;background:#CBDAF6"></div>
<div style="left:921px;top:615px;width:1px;height:18px;background:#A8A8B0"></div>
<div style="left:922px;top:615px;width:56px;height:17px;background:#CBDAF6"></div>
<div style="left:19px;top:632px;width:958px;height:1px;background:#A8A8B0"></div>
<div class="t" style="right:1106px;top:618px;">12</div>
<div class="t" style="left:60px;top:618px;">Durchschnitt 1</div>
<div class="t" style="left:176px;top:618px;">Lob / Preis</div>
<div class="t" style="left:326px;top:618px;"></div>
<div class="t" style="left:648px;top:618px;">Durchschnitt 1</div>
<div class="t" style="left:778px;top:618px;"></div>
<div class="t" style="left:850px;top:618px;"></div>
<div class="t" style="left:923px;top:618px;"></div>
<div style="left:978px;top:615px;width:19px;height:18px;border:1px solid #2C4A7A;border-radius:3px;background:linear-gradient(#E4ECFA,#A8BEE6)"></div>
<svg style="position:absolute;left:981.5px;top:618.0px" width="12" height="12" viewBox="0 0 12 12"><path d="M1.8 1.8L10.2 10.2M10.2 1.8L1.8 10.2" stroke="#F04454" stroke-width="2.9" stroke-linecap="round"/></svg>
<div style="left:19px;top:633px;width:40px;height:17px;background:#E8E8F2"></div>
<div style="left:58px;top:633px;width:1px;height:18px;background:#A8A8B0"></div>
<div style="left:59px;top:633px;width:116px;height:17px;background:#FFFFFF"></div>
<div style="left:174px;top:633px;width:1px;height:18px;background:#A8A8B0"></div>
<div style="left:175px;top:633px;width:150px;height:17px;background:#FFFFFF"></div>
<div style="left:324px;top:633px;width:1px;height:18px;background:#A8A8B0"></div>
<div style="left:325px;top:633px;width:97px;height:17px;background:#E8E8F2"></div>
<div style="left:421px;top:633px;width:1px;height:18px;background:#A8A8B0"></div>
<div style="left:422px;top:633px;width:45px;height:17px;background:#E8E8F2"></div>
<div style="left:466px;top:633px;width:1px;height:18px;background:#A8A8B0"></div>
<div style="left:467px;top:633px;width:45px;height:17px;background:#E8E8F2"></div>
<div style="left:511px;top:633px;width:1px;height:18px;background:#A8A8B0"></div>
<div style="left:512px;top:633px;width:45px;height:17px;background:#E8E8F2"></div>
<div style="left:556px;top:633px;width:1px;height:18px;background:#A8A8B0"></div>
<div style="left:557px;top:633px;width:45px;height:17px;background:#E8E8F2"></div>
<div style="left:601px;top:633px;width:1px;height:18px;background:#A8A8B0"></div>
<div style="left:602px;top:633px;width:45px;height:17px;background:#E8E8F2"></div>
<div style="left:646px;top:633px;width:1px;height:18px;background:#A8A8B0"></div>
<div style="left:647px;top:633px;width:130px;height:17px;background:#FFFFFF"></div>
<div style="left:776px;top:633px;width:1px;height:18px;background:#A8A8B0"></div>
<div style="left:777px;top:633px;width:72px;height:17px;background:#E8E8F2"></div>
<div style="left:848px;top:633px;width:1px;height:18px;background:#A8A8B0"></div>
<div style="left:849px;top:633px;width:73px;height:17px;background:#E8E8F2"></div>
<div style="left:921px;top:633px;width:1px;height:18px;background:#A8A8B0"></div>
<div style="left:922px;top:633px;width:56px;height:17px;background:#E8E8F2"></div>
<div style="left:19px;top:650px;width:958px;height:1px;background:#A8A8B0"></div>
<div class="t" style="right:1106px;top:636px;">13</div>
<div class="t" style="left:60px;top:636px;">Hinweis</div>
<div class="t" style="left:176px;top:636px;">Hinweis</div>
<div class="t" style="left:326px;top:636px;"></div>
<div class="t" style="left:648px;top:636px;">Hinweis</div>
<div class="t" style="left:778px;top:636px;"></div>
<div class="t" style="left:850px;top:636px;"></div>
<div class="t" style="left:923px;top:636px;"></div>
<div style="left:978px;top:633px;width:19px;height:18px;border:1px solid #2C4A7A;border-radius:3px;background:linear-gradient(#E4ECFA,#A8BEE6)"></div>
<svg style="position:absolute;left:981.5px;top:636.0px" width="12" height="12" viewBox="0 0 12 12"><path d="M1.8 1.8L10.2 10.2M10.2 1.8L1.8 10.2" stroke="#F04454" stroke-width="2.9" stroke-linecap="round"/></svg>
<div style="left:998px;top:416px;width:17px;height:36px;border:1px solid #2C4A7A;border-radius:3px;background:linear-gradient(#FFFFFF,#F0F0F8 50%,#D8DCE8)"></div>
<svg style="position:absolute;left:1001px;top:428px" width="11" height="12" viewBox="0 0 11 12"><path d="M1.5 1.5h8v4M1.5 1.5v8h3M1.5 4.5h8M5.5 1.5v5" fill="none" stroke="#000" stroke-width="1"/><path d="M4 7h7l-3.5 4z" fill="#000"/></svg>
<div style="left:998px;top:452px;width:17px;height:199px;background:#F4F4F8"></div>
<div style="left:999px;top:453px;width:15px;height:16px;border:1px solid #B8C4DC;border-radius:2px;background:linear-gradient(#EEF2FC,#C4D0EC)"></div>
<svg style="position:absolute;left:0;top:0;overflow:visible" width="1" height="1"><path d="M1002.5 463.0L1006.5 459.0L1010.5 463.0" fill="none" stroke="#4A6488" stroke-width="2"/></svg>
<div style="left:999px;top:492px;width:15px;height:130px;border:1px solid #A0B0D0;border-radius:2px;background:linear-gradient(90deg,#B8C8EC,#D4E0F8 50%,#B0C0E4)"></div>
<svg style="position:absolute;left:1002px;top:552px" width="9" height="6"><path d="M0 0.5h9M0 2.5h9M0 4.5h9" stroke="#8090B0" stroke-width="0.8"/></svg>
<div style="left:999px;top:634px;width:15px;height:16px;border:1px solid #B8C4DC;border-radius:2px;background:linear-gradient(#EEF2FC,#C4D0EC)"></div>
<svg style="position:absolute;left:0;top:0;overflow:visible" width="1" height="1"><path d="M1002.5 640.0L1006.5 644.0L1010.5 640.0" fill="none" stroke="#4A6488" stroke-width="2"/></svg>
<div style="left:56px;top:560px;width:270px;height:93px;border:2px solid #FA2424;box-shadow:3px 3px 4px rgba(0,0,0,0.32),inset 2px 2px 3px rgba(0,0,0,0.22)"></div>
<div style="left:19px;top:250px;width:538px;height:136px;border-top:1px solid #A0A0A8;border-left:1px solid #A0A0A8;background:#FFF"></div>
<div style="left:20px;top:251px;width:537px;height:20px;background:#F2F2FE"></div>
<div style="left:554px;top:254px;width:1px;height:16px;background:#C8C8D0"></div>
<div style="left:20px;top:270px;width:537px;height:1px;background:#DCDCE4"></div>
<div style="left:20px;top:271px;width:537px;height:1px;background:#B8B8C0"></div>
<div class="t" style="left:21px;top:256px;">Klassengruppe</div>
<div style="left:20px;top:272px;width:536px;height:18px;background:#E8E8F2;border-bottom:1px solid #A8A8B0;border-right:1px solid #A8A8B0"></div>
<div class="t" style="left:21px;top:275px;">2FOF1</div>
<div style="left:569px;top:175px;width:446px;height:91px;border-top:1px solid #A0A0A8;border-left:1px solid #A0A0A8;background:#FFF"></div>
<div style="left:570px;top:176px;width:427px;height:19px;background:#F2F2FE"></div>
<div style="left:772px;top:178px;width:1px;height:16px;background:#C8C8D0"></div>
<div style="left:976px;top:178px;width:1px;height:16px;background:#C8C8D0"></div>
<div style="left:570px;top:194px;width:427px;height:3px;background:linear-gradient(#DCDCE4,#B0B0B8)"></div>
<div class="t" style="left:571px;top:181px;">Bildungsgang</div>
<div class="t" style="left:775px;top:181px;">Jahrgangsstufe</div>
<div style="left:761px;top:183px;width:0;height:0;border-left:4px solid transparent;border-right:4px solid transparent;border-bottom:4px solid #2E4A60"></div>
<div class="t" style="left:572px;top:200px;">FS Organisation/Führung-Teilzeit</div>
<div class="t" style="left:776px;top:200px;">2</div>
<div style="left:570px;top:215px;width:203px;height:17px;background:#CBDAF6"></div>
<div style="left:774px;top:215px;width:202px;height:17px;background:#CBDAF6"></div>
<div style="left:773px;top:215px;width:1px;height:17px;background:#fff"></div>
<div style="left:977px;top:197px;width:19px;height:17px;border:1px solid #2C4A7A;border-radius:3px;background:linear-gradient(#E4ECFA,#A8BEE6)"></div>
<svg style="position:absolute;left:980.5px;top:199.5px" width="12" height="12" viewBox="0 0 12 12"><path d="M1.8 1.8L10.2 10.2M10.2 1.8L1.8 10.2" stroke="#F04454" stroke-width="2.9" stroke-linecap="round"/></svg>
<div style="left:977px;top:215px;width:19px;height:17px;border:1px solid #C4C4CC;border-radius:3px;background:linear-gradient(#F4F4F8,#DCDCE4)"></div>
<svg style="position:absolute;left:980.5px;top:217.5px" width="12" height="12" viewBox="0 0 12 12"><path d="M1.8 1.8L10.2 10.2M10.2 1.8L1.8 10.2" stroke="#8C8C94" stroke-width="2.9" stroke-linecap="round"/></svg>
<div style="left:997px;top:176px;width:17px;height:21px;border:1px solid #2C4A7A;border-radius:3px;background:linear-gradient(#FFFFFF,#F0F0F8 50%,#D8DCE8)"></div>
<svg style="position:absolute;left:1000px;top:180px" width="11" height="12" viewBox="0 0 11 12"><path d="M1.5 1.5h8v4M1.5 1.5v8h3M1.5 4.5h8M5.5 1.5v5" fill="none" stroke="#000" stroke-width="1"/><path d="M4 7h7l-3.5 4z" fill="#000"/></svg>
<div style="left:997px;top:197px;width:17px;height:68px;background:#F8F8FC"></div>
<div style="left:997px;top:201px;width:16px;height:12px;background:#F0F0F4"></div>
<svg style="position:absolute;left:0;top:0;overflow:visible" width="1" height="1"><path d="M1001.0 209.0L1005.0 205.0L1009.0 209.0" fill="none" stroke="#D0D0D8" stroke-width="2"/></svg>
<div style="left:997px;top:250px;width:16px;height:13px;background:#F0F0F4"></div>
<svg style="position:absolute;left:0;top:0;overflow:visible" width="1" height="1"><path d="M1001.0 254.5L1005.0 258.5L1009.0 254.5" fill="none" stroke="#D0D0D8" stroke-width="2"/></svg>
<div style="left:1043px;top:71px;width:111px;height:46px;border-top:1px solid #6E6E6E;border-left:1px solid #6E6E6E;box-shadow:inset 1px 1px 0 #C4C4CC,0 -1px 0 #FFF,0 1px 0 #FFF;background:#F0F0F6"></div>
<div style="left:1045px;top:73px;width:89px;height:20px;background:#F2F2FE"></div>
<div style="left:1133px;top:75px;width:1px;height:17px;background:#C8C8D0"></div>
<div style="left:1045px;top:92px;width:89px;height:1px;background:#DCDCE4"></div>
<div style="left:1045px;top:93px;width:89px;height:1px;background:#B0B0B8"></div>
<div class="t" style="left:1045px;top:78px;">Zweig</div>
<div style="left:1122px;top:82px;width:0;height:0;border-left:4px solid transparent;border-right:4px solid transparent;border-top:5px solid #2E4A60"></div>
<div style="left:1135px;top:73px;width:17px;height:21px;border:1px solid #2C4A7A;border-radius:3px;background:linear-gradient(#FFFFFF,#F0F0F8 50%,#D8DCE8)"></div>
<svg style="position:absolute;left:1138px;top:77px" width="11" height="12" viewBox="0 0 11 12"><path d="M1.5 1.5h8v4M1.5 1.5v8h3M1.5 4.5h8M5.5 1.5v5" fill="none" stroke="#000" stroke-width="1"/><path d="M4 7h7l-3.5 4z" fill="#000"/></svg>
<div style="left:1045px;top:94px;width:89px;height:17px;background:#4488F8"></div>
<div class="t" style="left:1046px;top:96px;color:#fff">BS</div>
<div style="left:1045px;top:111px;width:89px;height:5px;background:#E4E4EC"></div>
<div style="left:1137px;top:95px;width:15px;height:10px;background:#F0F0F4"></div>
<svg style="position:absolute;left:0;top:0;overflow:visible" width="1" height="1"><path d="M1140.5 102.0L1144.5 98.0L1148.5 102.0" fill="none" stroke="#D0D0D8" stroke-width="2"/></svg>
<div style="left:1137px;top:106px;width:15px;height:10px;background:#F0F0F4"></div>
<svg style="position:absolute;left:0;top:0;overflow:visible" width="1" height="1"><path d="M1140.5 109.0L1144.5 113.0L1148.5 109.0" fill="none" stroke="#D0D0D8" stroke-width="2"/></svg>
<div style="left:1043px;top:123px;width:111px;height:123px;border-top:1px solid #6E6E6E;border-left:1px solid #6E6E6E;box-shadow:inset 1px 1px 0 #C4C4CC,0 -1px 0 #FFF,0 1px 0 #FFF;background:#FFF"></div>
<div style="left:1045px;top:125px;width:90px;height:20px;background:#F2F2FE"></div>
<div style="left:1045px;top:144px;width:90px;height:1px;background:#DCDCE4"></div>
<div style="left:1045px;top:145px;width:90px;height:1px;background:#B0B0B8"></div>
<div class="t" style="left:1046px;top:130px;letter-spacing:-0.35px">Zeugnisart (Anze...</div>
<div style="left:1135px;top:125px;width:17px;height:21px;border:1px solid #2C4A7A;border-radius:3px;background:linear-gradient(#FFFFFF,#F0F0F8 50%,#D8DCE8)"></div>
<svg style="position:absolute;left:1138px;top:129px" width="11" height="12" viewBox="0 0 11 12"><path d="M1.5 1.5h8v4M1.5 1.5v8h3M1.5 4.5h8M5.5 1.5v5" fill="none" stroke="#000" stroke-width="1"/><path d="M4 7h7l-3.5 4z" fill="#000"/></svg>
<div style="left:1045px;top:146px;width:90px;height:18px;background:#E8E8F2;overflow:hidden"></div>
<div class="t" style="left:1046px;top:149px;letter-spacing:-0.4px">Jahreszeugnis</div>
<div style="left:1045px;top:164px;width:90px;height:18px;background:linear-gradient(#5070C8,#4886F8 2px)"></div>
<div class="t" style="left:1046px;top:167px;color:#fff;letter-spacing:-0.35px">Abschlusszeugnis</div>
<div style="left:1045px;top:182px;width:90px;height:18px;background:#E8E8F2;overflow:hidden"></div>
<div class="t" style="left:1046px;top:185px;letter-spacing:-0.4px">Abgangszeugnis</div>
<div style="left:1045px;top:200px;width:90px;height:18px;background:#CBDAF6;overflow:hidden"></div>
<div class="t" style="left:1046px;top:203px;letter-spacing:-0.4px">Zertifikat</div>
<div style="left:1045px;top:218px;width:90px;height:18px;background:#E8E8F2;overflow:hidden"></div>
<div class="t" style="left:1046px;top:221px;letter-spacing:-0.4px">Fachhochschulre...</div>
<div style="left:1045px;top:236px;width:90px;height:9px;background:#CBDAF6;overflow:hidden"></div>
<div style="left:1045px;top:236px;width:90px;height:9px;overflow:hidden"><div class="t" style="left:1px;top:3px">Prüfungsbeiblatt</div></div>
<div style="left:1041px;top:161px;width:95px;height:22px;border:2px solid #FA2424;box-shadow:3px 3px 4px rgba(0,0,0,0.32),inset 2px 2px 3px rgba(0,0,0,0.22)"></div>
<div style="left:1137px;top:146px;width:15px;height:99px;background:#F8F8FC"></div>
<div style="left:1137px;top:147px;width:15px;height:15px;border:1px solid #B8C4DC;border-radius:2px;background:linear-gradient(#EEF2FC,#C4D0EC)"></div>
<svg style="position:absolute;left:0;top:0;overflow:visible" width="1" height="1"><path d="M1140.5 156.5L1144.5 152.5L1148.5 156.5" fill="none" stroke="#4A6488" stroke-width="2"/></svg>
<div style="left:1137px;top:182px;width:15px;height:16px;border:1px solid #A8B8D8;border-radius:2px;background:linear-gradient(90deg,#D0DCF4,#E8EEFC,#C0CCE8)"></div>
<svg style="position:absolute;left:1141px;top:186px" width="7" height="7"><path d="M0 0.5h7M0 2.5h7M0 4.5h7M0 6.5h7" stroke="#8C9CC0" stroke-width="0.9"/></svg>
<div style="left:1137px;top:229px;width:15px;height:15px;border:1px solid #B8C4DC;border-radius:2px;background:linear-gradient(#EEF2FC,#C4D0EC)"></div>
<svg style="position:absolute;left:0;top:0;overflow:visible" width="1" height="1"><path d="M1140.5 234.5L1144.5 238.5L1148.5 234.5" fill="none" stroke="#4A6488" stroke-width="2"/></svg>
<div style="left:1043px;top:251px;width:111px;height:1px;background:#FFF"></div>
<div style="left:1043px;top:257px;width:111px;height:1px;background:#6E6E6E"></div>
<div style="left:1043px;top:261px;width:87px;height:23px;border:1px solid #2C4A7A;border-radius:3px;background:linear-gradient(#FFFFFF,#F0F0F8 45%,#D8D8E6);text-align:center;line-height:21px;padding-top:1px;font-size:11px">Filter</div>
<div style="left:1137px;top:266px;width:13px;height:13px;border:1px solid #C8C8D0;background:linear-gradient(135deg,#E8E8EC,#FFF)"></div>
<div style="left:1043px;top:294px;width:90px;height:23px;border:1px solid #2C4A7A;border-radius:3px;background:linear-gradient(#FFFFFF,#F0F0F8 45%,#D8D8E6);text-align:center;line-height:21px;padding-top:1px;font-size:11px">Suche</div>
<div style="left:1140px;top:299px;width:9px;height:13px;border:1px solid #C8C8D0;border-right:none;background:linear-gradient(135deg,#E8E8EC,#FFF)"></div>
<div style="left:1043px;top:320px;width:111px;height:1px;background:#FFF"></div>
<div style="left:1043px;top:326px;width:111px;height:294px;border-top:1px solid #6E6E6E;border-left:1px solid #9C9CA4;box-shadow:inset 0 1px 0 #C4C4CC,0 -1px 0 #FFF;background:#FFF"></div>
<div style="left:1045px;top:329px;width:90px;height:19px;background:#F2F2FE"></div>
<div style="left:1134px;top:331px;width:1px;height:16px;background:#C8C8D0"></div>
<div style="left:1045px;top:347px;width:90px;height:1px;background:#DCDCE4"></div>
<div style="left:1045px;top:348px;width:90px;height:1px;background:#B0B0B8"></div>
<div class="t" style="left:1045px;top:333px;">Bezeichnung</div>
<div style="left:1123px;top:337px;width:0;height:0;border-left:4px solid transparent;border-right:4px solid transparent;border-bottom:4px solid #2E4A60"></div>
<div style="left:1136px;top:328px;width:17px;height:21px;border:1px solid #2C4A7A;border-radius:3px;background:linear-gradient(#FFFFFF,#F0F0F8 50%,#D8DCE8)"></div>
<svg style="position:absolute;left:1139px;top:332px" width="11" height="12" viewBox="0 0 11 12"><path d="M1.5 1.5h8v4M1.5 1.5v8h3M1.5 4.5h8M5.5 1.5v5" fill="none" stroke="#000" stroke-width="1"/><path d="M4 7h7l-3.5 4z" fill="#000"/></svg>
<div style="left:1045px;top:349px;width:90px;height:18px;background:#E8E8F2"></div>
<div class="t" style="left:1046px;top:352px;letter-spacing:-0.3px">3BKR</div>
<div style="left:1045px;top:367px;width:90px;height:18px;background:#CBDAF6"></div>
<div class="t" style="left:1046px;top:370px;letter-spacing:-0.3px">3BKSVM</div>
<div style="left:1045px;top:385px;width:90px;height:18px;background:#E8E8F2"></div>
<div class="t" style="left:1046px;top:388px;letter-spacing:-0.3px">3BKWA-IW2,5</div>
<div style="left:1045px;top:403px;width:90px;height:18px;background:#CBDAF6"></div>
<div class="t" style="left:1046px;top:406px;letter-spacing:-0.3px">ABZ BKSPT</div>
<div style="left:1045px;top:421px;width:90px;height:18px;background:#E8E8F2"></div>
<div class="t" style="left:1046px;top:424px;letter-spacing:-0.3px">ASZ 1BFAHT</div>
<div style="left:1045px;top:439px;width:90px;height:18px;background:#CBDAF6"></div>
<div class="t" style="left:1046px;top:442px;letter-spacing:-0.3px">ASZ 1BFAHT_1</div>
<div style="left:1045px;top:457px;width:90px;height:18px;background:#E8E8F2"></div>
<div class="t" style="left:1046px;top:460px;letter-spacing:-0.3px">ASZ 1BK1P</div>
<div style="left:1045px;top:475px;width:90px;height:18px;background:#CBDAF6"></div>
<div class="t" style="left:1046px;top:478px;letter-spacing:-0.3px">ASZ 1BKST</div>
<div style="left:1045px;top:493px;width:90px;height:18px;background:#E8E8F2"></div>
<div class="t" style="left:1046px;top:496px;letter-spacing:-0.3px">ASZ 1VABO</div>
<div style="left:1045px;top:511px;width:90px;height:18px;background:#CBDAF6"></div>
<div class="t" style="left:1046px;top:514px;letter-spacing:-0.3px">ASZ 3BFA1 Helfer</div>
<div style="left:1045px;top:529px;width:90px;height:18px;background:#E8E8F2"></div>
<div class="t" style="left:1046px;top:532px;letter-spacing:-0.3px">ASZ 3BFA3</div>
<div style="left:1045px;top:547px;width:90px;height:18px;background:#CBDAF6"></div>
<div class="t" style="left:1046px;top:550px;letter-spacing:-0.3px">ASZ 3BKSPIT</div>
<div style="left:1045px;top:565px;width:90px;height:18px;background:#E8E8F2"></div>
<div class="t" style="left:1046px;top:568px;letter-spacing:-0.3px">ASZ_2BFH</div>
<div style="left:1045px;top:583px;width:90px;height:18px;background:linear-gradient(#5890C8,#58B0FF 5px)"></div>
<div class="t" style="left:1046px;top:586px;color:#fff">FOFT</div>
<div style="left:1045px;top:601px;width:90px;height:18px;background:#E8E8F2"></div>
<div class="t" style="left:1046px;top:604px;letter-spacing:-0.3px">ASZ_FPGT</div>
<div style="left:1039px;top:582px;width:97px;height:20px;border:2px solid #FA2424;box-shadow:3px 3px 4px rgba(0,0,0,0.32),inset 2px 2px 3px rgba(0,0,0,0.22)"></div>
<div style="left:1137px;top:349px;width:15px;height:270px;background:#FFF"></div>
<div style="left:1137px;top:350px;width:15px;height:15px;border:1px solid #B8C4DC;border-radius:2px;background:linear-gradient(#EEF2FC,#C4D0EC)"></div>
<svg style="position:absolute;left:0;top:0;overflow:visible" width="1" height="1"><path d="M1140.5 359.5L1144.5 355.5L1148.5 359.5" fill="none" stroke="#4A6488" stroke-width="2"/></svg>
<div style="left:1138px;top:490px;width:14px;height:60px;border:1px solid #A8B8D8;border-radius:2px;background:linear-gradient(90deg,#C8D4F0,#E0E8FA,#B8C8E8)"></div>
<svg style="position:absolute;left:1141px;top:516px" width="7" height="7"><path d="M0 0.5h7M0 2.5h7M0 4.5h7M0 6.5h7" stroke="#8C9CC0" stroke-width="0.9"/></svg>
<div style="left:1137px;top:604px;width:15px;height:15px;border:1px solid #B8C4DC;border-radius:2px;background:linear-gradient(#EEF2FC,#C4D0EC)"></div>
<svg style="position:absolute;left:0;top:0;overflow:visible" width="1" height="1"><path d="M1140.5 609.5L1144.5 613.5L1148.5 609.5" fill="none" stroke="#4A6488" stroke-width="2"/></svg>
<div class="t" style="left:1043px;top:623px;width:111px;text-align:center;letter-spacing:-0.25px">Anzahl: 58</div>
<div style="left:1043px;top:640px;width:114px;height:1px;background:#FFF"></div>
<div style="left:1119px;top:663px;width:35px;height:1px;background:#D0D0D8"></div>
<svg style="position:absolute;left:0;top:0" width="1" height="1"><defs><linearGradient id="gb" x1="0" y1="0" x2="0" y2="1"><stop offset="0" stop-color="#B4D4FA"/><stop offset="0.55" stop-color="#78A8EC"/><stop offset="1" stop-color="#3070D8"/></linearGradient><linearGradient id="gn" x1="0" y1="0" x2="0" y2="1"><stop offset="0" stop-color="#8ED07A"/><stop offset="1" stop-color="#3A9A30"/></linearGradient></defs></svg>
<svg style="position:absolute;left:8px;top:32px" width="16" height="16" viewBox="0 0 16 16"><path d="M0.5 0.5h9l4 4v11h-13z" fill="#D8E8FA" stroke="#3A78D0"/><path d="M9.5 0.5v4h4" fill="#fff" stroke="#3A78D0"/><rect x="1" y="11" width="9" height="2" fill="#4AA0F0"/><circle cx="11.5" cy="12.2" r="3.6" fill="#3E9A2E"/><path d="M9.5 12.2h4M11.5 10.2v4" stroke="#fff" stroke-width="1.6"/></svg>
<svg style="position:absolute;left:27px;top:32px" width="16" height="16" viewBox="0 0 16 16"><path d="M0 1.5a1.5 1.5 0 0 1 1.5-1.5h11.5l3 3v11.5a1.5 1.5 0 0 1-1.5 1.5h-13a1.5 1.5 0 0 1-1.5-1.5z" fill="#9A9A9A"/><rect x="3" y="0.5" width="9" height="5" fill="#A8A8A8" stroke="#8A8A8A" stroke-width="0.6"/><rect x="4" y="1.5" width="1" height="3" fill="#777"/><rect x="3" y="9" width="10" height="6" fill="#A4A4A4" stroke="#888" stroke-width="0.6"/><path d="M4 11.5h8M4 13.5h8" stroke="#8E8E8E" stroke-width="0.7"/></svg>
<svg style="position:absolute;left:47px;top:32px" width="16" height="16" viewBox="0 0 16 16"><path d="M1.5 4.5h8a4 4 0 0 1 0 8h-5" fill="none" stroke="#9A9A9A" stroke-width="3"/><path d="M0.5 12.5l5-4v8z" fill="#9A9A9A"/></svg>
<svg style="position:absolute;left:68px;top:33px" width="14" height="14" viewBox="0 0 14 14"><path d="M2 2l10 10M12 2l-10 10" stroke="#F23A4A" stroke-width="3.2" stroke-linecap="round"/></svg>
<svg style="position:absolute;left:87px;top:33px" width="16" height="16" viewBox="0 0 16 16"><rect x="0.5" y="0.5" width="14" height="12.5" rx="1" fill="#FAFAF4" stroke="#5A8AD0"/><rect x="1" y="1" width="13" height="2.5" fill="#88B0E8"/><path d="M2 5.5h2M2 9.5h2" stroke="#3A70D0" stroke-width="1.2"/><path d="M6.3 8v-2.5h7M6.3 12v-2.5h5" fill="none" stroke="#B0B0B0" stroke-width="1"/><circle cx="12.4" cy="11.2" r="3.4" fill="#E06A10"/><path d="M10.4 11.2h4" stroke="#fff" stroke-width="1.5"/></svg>
<div style="left:108px;top:31px;width:1px;height:18px;background:#A8A8B0"></div>
<svg style="position:absolute;left:120px;top:33px" width="12" height="13" viewBox="0 0 12 13"><rect x="1" y="0.5" width="2.5" height="12" fill="url(#gb)" stroke="#1E58C8" stroke-width="0.8"/><path d="M11.0 0.5L3.5 6.5L11.0 12.5z" fill="url(#gb)" stroke="#1E58C8" stroke-width="0.9" stroke-linejoin="round"/></svg>
<svg style="position:absolute;left:138px;top:33px" width="16" height="13" viewBox="0 0 16 13"><path d="M8 0.5L1 6.5L8 12.5z" fill="url(#gb)" stroke="#1E58C8" stroke-width="0.9" stroke-linejoin="round"/><path d="M14.5 0.5L7.5 6.5L14.5 12.5z" fill="url(#gb)" stroke="#1E58C8" stroke-width="0.9" stroke-linejoin="round"/></svg>
<svg style="position:absolute;left:161px;top:33px" width="9" height="13" viewBox="0 0 9 13"><path d="M7.8 0.5L0.8 6.5L7.8 12.5z" fill="url(#gb)" stroke="#1E58C8" stroke-width="0.9" stroke-linejoin="round"/></svg>
<svg style="position:absolute;left:181px;top:33px" width="9" height="13" viewBox="0 0 9 13"><path d="M0.8 0.5L7.8 6.5L0.8 12.5z" fill="url(#gb)" stroke="#1E58C8" stroke-width="0.9" stroke-linejoin="round"/></svg>
<svg style="position:absolute;left:198px;top:33px" width="16" height="13" viewBox="0 0 16 13"><path d="M1 0.5L8 6.5L1 12.5z" fill="url(#gb)" stroke="#1E58C8" stroke-width="0.9" stroke-linejoin="round"/><path d="M7.5 0.5L14.5 6.5L7.5 12.5z" fill="url(#gb)" stroke="#1E58C8" stroke-width="0.9" stroke-linejoin="round"/></svg>
<svg style="position:absolute;left:220px;top:33px" width="12" height="13" viewBox="0 0 12 13"><path d="M0.8 0.5L8.3 6.5L0.8 12.5z" fill="url(#gb)" stroke="#1E58C8" stroke-width="0.9" stroke-linejoin="round"/><rect x="8.5" y="0.5" width="2.5" height="12" fill="url(#gb)" stroke="#1E58C8" stroke-width="0.8"/></svg>
<svg style="position:absolute;left:238px;top:32px" width="16" height="16" viewBox="0 0 16 16"><path d="M1.6 9Q2 4.6 6.5 4.6H9.5" fill="none" stroke="#4CA840" stroke-width="3.2"/><path d="M8.8 0.3L13.8 4.6L8.8 8.9z" fill="#4CA840"/><path d="M14.4 7Q14 11.4 9.5 11.4H6.5" fill="none" stroke="#4CA840" stroke-width="3.2"/><path d="M7.2 7.1L2.2 11.4L7.2 15.7z" fill="#4CA840"/><path d="M3 7.5Q4 5.2 7 5.2H9" fill="none" stroke="#98D890" stroke-width="1"/><path d="M13 9Q12 10.8 9 10.8H7" fill="none" stroke="#98D890" stroke-width="1"/></svg>
<div style="left:259px;top:31px;width:1px;height:18px;background:#A8A8B0"></div>
<svg style="position:absolute;left:269px;top:35px" width="15" height="10" viewBox="0 0 15 10"><path d="M0.5 5l5-4.5v3h9v3h-9v3z" fill="#9C9C9C"/></svg>
<svg style="position:absolute;left:290px;top:32px" width="14" height="16" viewBox="0 0 14 16"><path d="M7.3 0.2V11M13 2.2L6.3 10.5" stroke="#9C9C9C" stroke-width="1.6" fill="none"/><circle cx="3.9" cy="11.6" r="2.3" fill="none" stroke="#9C9C9C" stroke-width="1.6"/><circle cx="8.8" cy="13.3" r="2.1" fill="none" stroke="#9C9C9C" stroke-width="1.6"/></svg>
<svg style="position:absolute;left:309px;top:32px" width="16" height="16" viewBox="0 0 16 16"><path d="M0 0h6l3 3v8h-9z" fill="#A0A0A0"/><path d="M6 5h6l4 4v7h-10z" fill="#989898" stroke="#F0F0FA" stroke-width="0.6"/></svg>
<svg style="position:absolute;left:329px;top:32px" width="16" height="16" viewBox="0 0 16 16"><path d="M0 2q0-2 2-2h5q2 0 2 2v10h-9z" fill="#A0A0A0"/><path d="M6 5h6l4 4v7h-10z" fill="#989898" stroke="#F0F0FA" stroke-width="0.6"/></svg>
<svg style="position:absolute;left:349px;top:32px" width="16" height="16" viewBox="0 0 16 16"><defs><linearGradient id="sl" x1="0" y1="0" x2="1" y2="1"><stop offset="0" stop-color="#A8C8F4"/><stop offset="1" stop-color="#4A80D8"/></linearGradient></defs><rect x="2.5" y="2.2" width="8.5" height="7.5" fill="#B8D4F8" stroke="#A0C0EC" stroke-width="0.6"/><rect x="5.5" y="6" width="8.5" height="7.5" fill="url(#sl)" stroke="#3A70D0" stroke-width="0.8"/><rect x="0.5" y="0.5" width="2.2" height="2.2" fill="#fff" stroke="#333" stroke-width="0.9"/><rect x="13.3" y="0.5" width="2.2" height="2.2" fill="#fff" stroke="#333" stroke-width="0.9"/><rect x="0.5" y="13.3" width="2.2" height="2.2" fill="#fff" stroke="#333" stroke-width="0.9"/><rect x="13" y="13" width="3" height="3" fill="#111"/></svg>
<div style="left:370px;top:31px;width:1px;height:18px;background:#A8A8B0"></div>
<svg style="position:absolute;left:380px;top:32px" width="16" height="16" viewBox="0 0 16 16"><path d="M4 0.5h6q2 0 2.5 2v4h-9z" fill="#A4A4A4"/><rect x="0.5" y="6" width="15" height="7" rx="2.5" fill="#989898"/><rect x="3" y="10" width="10" height="5.5" rx="1" fill="#A8A8A8"/></svg>
<svg style="position:absolute;left:400px;top:34px" width="16" height="12" viewBox="0 0 16 12"><ellipse cx="8" cy="6" rx="7.8" ry="5.8" fill="#9E9E9E"/><ellipse cx="8" cy="5.5" rx="1" ry="0.8" fill="#808080"/></svg>
<svg style="position:absolute;left:421px;top:32px" width="14" height="15" viewBox="0 0 14 15"><defs><radialGradient id="bu" cx="0.5" cy="0.45" r="0.5"><stop offset="0" stop-color="#FFFFE0"/><stop offset="0.7" stop-color="#FFF0A0"/><stop offset="1" stop-color="#F0A030"/></radialGradient></defs><circle cx="7" cy="5.8" r="5.6" fill="url(#bu)" stroke="#F0A848" stroke-width="0.8"/><rect x="5" y="6.5" width="4" height="4" fill="#F0C020"/><rect x="5" y="10.5" width="4" height="3.5" fill="#606060"/></svg>
<svg style="position:absolute;left:440px;top:32px" width="16" height="16" viewBox="0 0 16 16"><defs><linearGradient id="be" x1="0" y1="0" x2="1" y2="0"><stop offset="0" stop-color="#E8B830"/><stop offset="0.45" stop-color="#FFE890"/><stop offset="1" stop-color="#C89010"/></linearGradient></defs><g transform="rotate(38 8 8.5)"><path d="M8 2.2C5.2 2.2 4.3 4.6 4.3 7.2L3.8 10.4Q2.2 11.4 2.2 12.6H13.8Q13.8 11.4 12.2 10.4L11.7 7.2C11.7 4.6 10.8 2.2 8 2.2z" fill="url(#be)" stroke="#C08A18" stroke-width="0.8"/><circle cx="8" cy="1.4" r="1.1" fill="none" stroke="#C89020" stroke-width="0.9"/><ellipse cx="8" cy="14" rx="1.6" ry="1.2" fill="#B07A10"/></g></svg>
<div style="left:461px;top:31px;width:1px;height:18px;background:#A8A8B0"></div>
<svg style="position:absolute;left:472px;top:33px" width="15" height="14" viewBox="0 0 15 14"><defs><radialGradient id="hp" cx="0.4" cy="0.35" r="0.6"><stop offset="0" stop-color="#B0D0F8"/><stop offset="1" stop-color="#4A7CC8"/></radialGradient></defs><circle cx="7.25" cy="7" r="6.6" fill="url(#hp)" stroke="#4A80D0" stroke-width="0.8"/><circle cx="7.25" cy="7" r="5.2" fill="none" stroke="#E8F0FF" stroke-width="0.7"/><path d="M5.2 5.3q0-2.1 2.1-2.1t2 1.9q0 1.2-1.2 1.8q-0.8 0.5-0.8 1.4" fill="none" stroke="#fff" stroke-width="1.9"/><circle cx="7.3" cy="10.6" r="1.1" fill="#fff"/></svg>
<div style="left:492px;top:31px;width:1px;height:18px;background:#A8A8B0"></div>
<svg style="position:absolute;left:1103px;top:32px" width="16" height="16" viewBox="0 0 16 16"><rect x="0.5" y="0.5" width="11" height="12" rx="1.5" fill="#DCEAFA" stroke="#7AA6DC"/><rect x="6.5" y="5.5" width="9" height="10" rx="1.5" fill="#E4F0FC" stroke="#7AA6DC"/><path d="M3 4.5q4-2.5 7 1.5l1.5-1.5 1 6.5-6-0.5 1.5-1.5q-2-2.5-5-2z" fill="#B8E858" stroke="#38A038" stroke-width="0.9"/></svg>
<div style="left:1124px;top:31px;width:1px;height:18px;background:#A8A8B0"></div>
<svg style="position:absolute;left:1137px;top:35px" width="10" height="9" viewBox="0 0 10 9"><path d="M1 1L9 8M9 1L1 8" stroke="#000" stroke-width="1.5"/></svg>
<div style="left:1155px;top:31px;width:1px;height:18px;background:#A8A8B0"></div>
<svg style="position:absolute;left:1050px;top:646px" width="12" height="12" viewBox="0 0 12 12"><rect x="1" y="0.5" width="2.5" height="11" fill="url(#gb)" stroke="#1E58C8" stroke-width="0.8"/><path d="M10.5 0.5L3.5 6.0L10.5 11.5z" fill="url(#gb)" stroke="#1E58C8" stroke-width="0.9" stroke-linejoin="round"/></svg>
<svg style="position:absolute;left:1070px;top:646px" width="15" height="12" viewBox="0 0 15 12"><path d="M7.3 0.5L0.8 6.0L7.3 11.5z" fill="url(#gb)" stroke="#1E58C8" stroke-width="0.9" stroke-linejoin="round"/><path d="M13.5 0.5L7 6.0L13.5 11.5z" fill="url(#gb)" stroke="#1E58C8" stroke-width="0.9" stroke-linejoin="round"/></svg>
<svg style="position:absolute;left:1094px;top:646px" width="8" height="12" viewBox="0 0 8 12"><path d="M7.0 0.5L0.5 6.0L7.0 11.5z" fill="url(#gb)" stroke="#1E58C8" stroke-width="0.9" stroke-linejoin="round"/></svg>
<svg style="position:absolute;left:1114px;top:646px" width="8" height="12" viewBox="0 0 8 12"><path d="M0.8 0.5L7.3 6.0L0.8 11.5z" fill="url(#gb)" stroke="#1E58C8" stroke-width="0.9" stroke-linejoin="round"/></svg>
<svg style="position:absolute;left:1132px;top:646px" width="15" height="12" viewBox="0 0 15 12"><path d="M0.8 0.5L7.3 6.0L0.8 11.5z" fill="url(#gb)" stroke="#1E58C8" stroke-width="0.9" stroke-linejoin="round"/><path d="M7 0.5L13.5 6.0L7 11.5z" fill="url(#gb)" stroke="#1E58C8" stroke-width="0.9" stroke-linejoin="round"/></svg>
<div style="left:1043px;top:663px;width:35px;height:1px;background:#D4D4DC"></div>
</body></html>
